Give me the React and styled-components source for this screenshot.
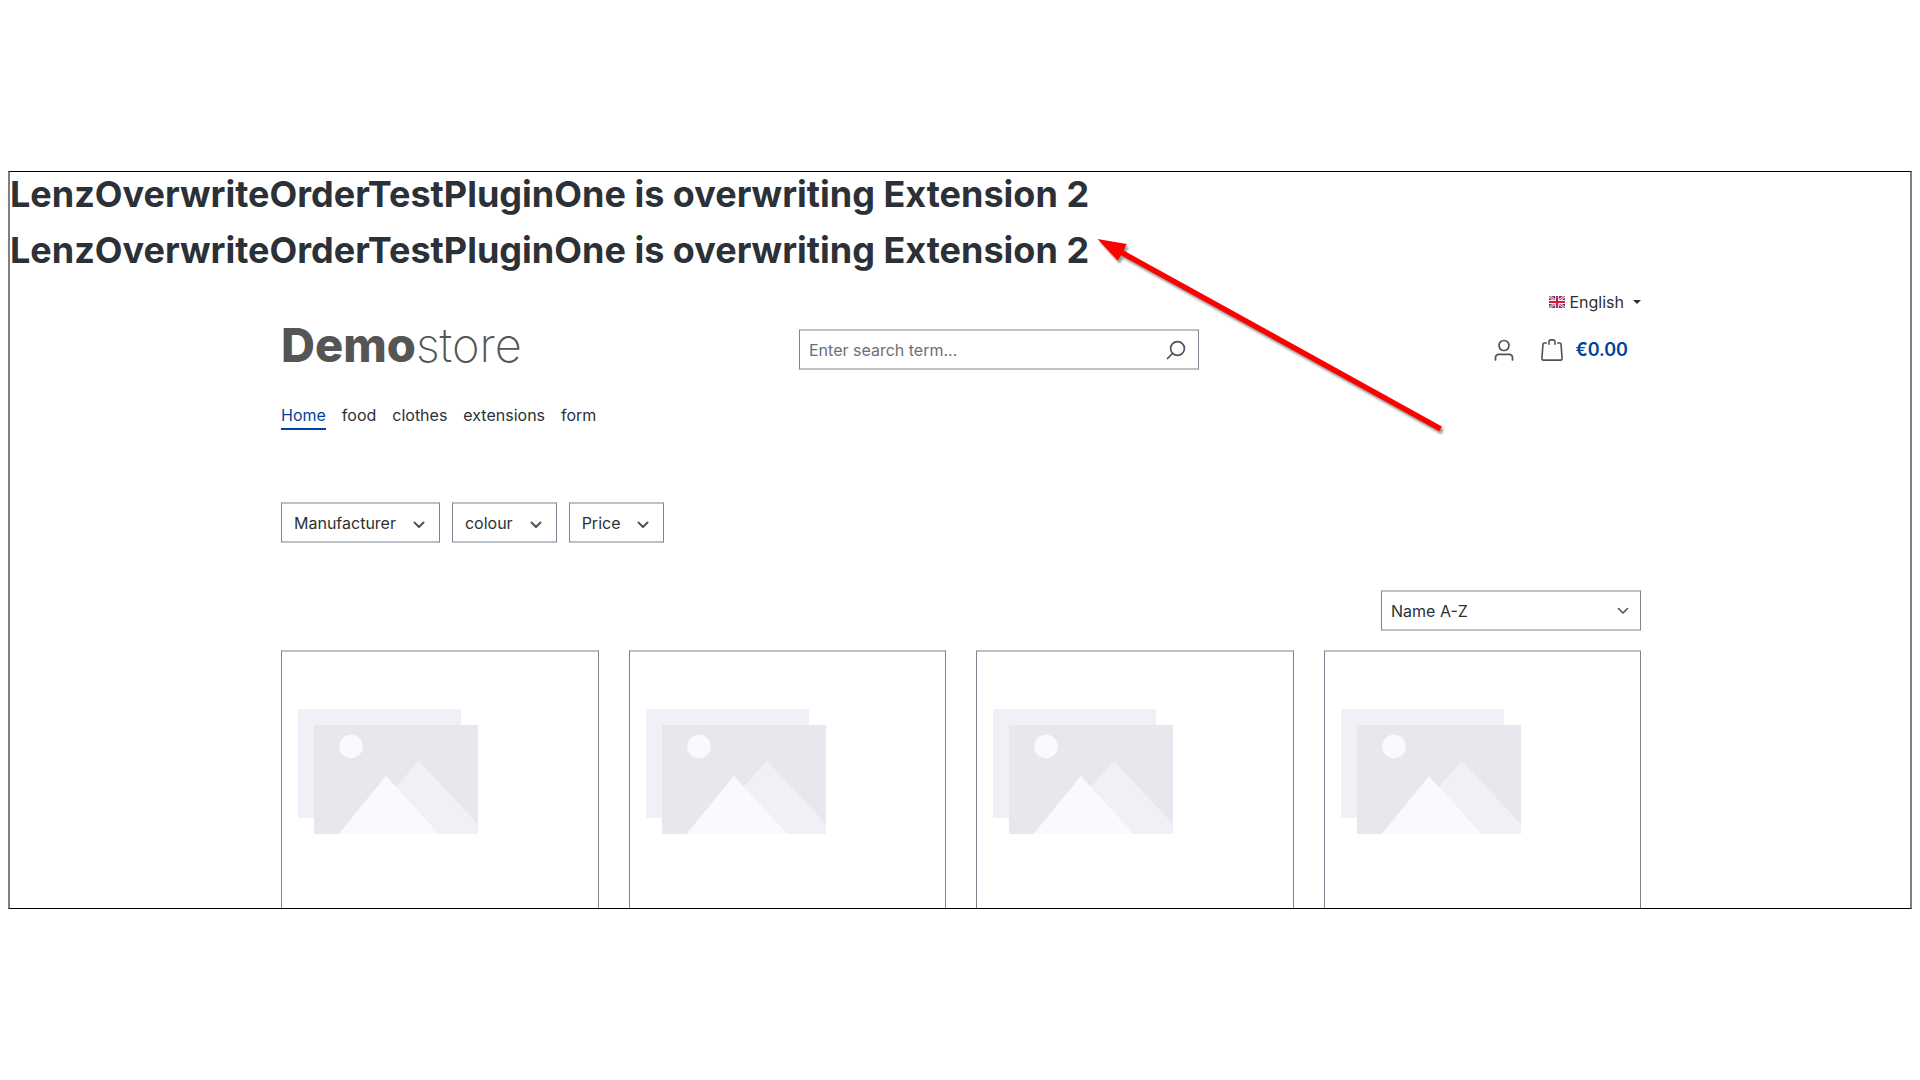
import styled, { createGlobalStyle } from "styled-components";

const navItems = ["Home", "food", "clothes", "extensions", "form"];
const filters = ["Manufacturer", "colour", "Price"];
const products = [1, 2, 3, 4];

function Flag() {
  return (
    <svg width="16" height="12" viewBox="0 0 16 12" aria-hidden="true">
      <rect width="16" height="12" fill="#3b4a86" />
      <path d="M0 0L16 12M16 0L0 12" stroke="#f0e6ec" strokeWidth="2.6" />
      <path d="M0 0L16 12M16 0L0 12" stroke="#d8183c" strokeWidth="0.9" />
      <path d="M8 0V12M0 6H16" stroke="#f6eef2" strokeWidth="4" />
      <path d="M8 0V12M0 6H16" stroke="#d8183c" strokeWidth="2.2" />
    </svg>
  );
}

function Chevron({ weight = 2 }) {
  return (
    <svg width="12" height="8" viewBox="0 0 12 8" fill="none" aria-hidden="true">
      <path
        d="M1.5 1.5L6 6L10.5 1.5"
        stroke="#4a545b"
        strokeWidth={weight}
        strokeLinecap="round"
        strokeLinejoin="round"
      />
    </svg>
  );
}

function SearchIcon() {
  return (
    <svg width="20" height="20" viewBox="0 0 20 20" fill="none" stroke="#4a545b" strokeWidth="1.7" strokeLinecap="round" aria-hidden="true">
      <circle cx="11.5" cy="8.5" r="6.9" />
      <path d="M6.5 13.5L1.5 18.5" />
    </svg>
  );
}

function AccountIcon() {
  return (
    <svg width="20" height="22" viewBox="0 0 20 22" fill="none" stroke="#4a545b" strokeWidth="1.7" strokeLinecap="round" aria-hidden="true">
      <circle cx="10" cy="6.5" r="5" />
      <path d="M1.5 21V19C1.5 16.8 3 15.3 5 15.3H15C17 15.3 18.5 16.8 18.5 19V21" />
    </svg>
  );
}

function BagIcon() {
  return (
    <svg width="22" height="22" viewBox="0 0 22 22" fill="none" stroke="#4a545b" strokeWidth="1.6" strokeLinecap="round" strokeLinejoin="round" aria-hidden="true">
      <path d="M5.3 4H3.2C2.5 4 2.1 4.4 2 5L0.9 19.4C0.8 20.4 1.4 21.1 2.4 21.1H19.6C20.6 21.1 21.2 20.4 21.1 19.4L20 5C19.9 4.4 19.5 4 18.8 4H16.7" />
      <path d="M8 5.2V2.6C8 1.5 8.6 0.9 9.6 0.9H12.4C13.4 0.9 14 1.5 14 2.6V5.2" />
    </svg>
  );
}

function Placeholder() {
  return (
    <svg width="180" height="125" viewBox="0 0 180 125" aria-hidden="true">
      <rect width="163" height="109" fill="#f0f1f7" />
      <rect x="16" y="16" width="164" height="109" fill="#e7e8ed" />
      <path d="M55 125L121 52L180 115V125Z" fill="#f0f1f7" />
      <path d="M40.500 125L88 67L141 125Z" fill="#f9faff" />
      <circle cx="53" cy="37.500" r="11.800" fill="#f9faff" />
    </svg>
  );
}

function App() {
  return (
    <Page>
      <GlobalStyle />
      <Frame>
        <Title>LenzOverwriteOrderTestPluginOne is overwriting Extension 2</Title>
        <Title>LenzOverwriteOrderTestPluginOne is overwriting Extension 2</Title>

        <Container>
          <TopBar>
            <LanguageButton type="button">
              <Flag />
              English
              <Caret />
            </LanguageButton>
          </TopBar>

          <Header>
            <Logo href="#">
              <b>Demo</b>store
            </Logo>
            <SearchForm role="search">
              <input type="text" placeholder="Enter search term..." aria-label="Search" />
              <button type="button" aria-label="Search">
                <SearchIcon />
              </button>
            </SearchForm>
            <Actions>
              <IconButton type="button" aria-label="Your account">
                <AccountIcon />
              </IconButton>
              <CartLink href="#">
                <BagIcon />
                €0.00
              </CartLink>
            </Actions>
          </Header>

          <Nav>
            {navItems.map((item) => (
              <NavLink key={item} href="#" $active={item === "Home"}>
                {item}
              </NavLink>
            ))}
          </Nav>

          <Filters>
            {filters.map((name) => (
              <FilterButton key={name} type="button">
                {name}
                <Chevron />
              </FilterButton>
            ))}
          </Filters>

          <Sorting>
            <SelectBox>
              <select aria-label="Sorting" defaultValue="name-asc">
                <option value="name-asc">Name A-Z</option>
              </select>
              <Chevron weight={1.6} />
            </SelectBox>
          </Sorting>

          <Listing>
            {products.map((id) => (
              <Card key={id}>
                <Placeholder />
              </Card>
            ))}
          </Listing>
        </Container>

        <Arrow width="350" height="200" viewBox="0 0 350 200" aria-hidden="true">
          <path
            d="M1.500 3L30.700 8L27.600 14.500L345.900 190.400L343.200 195.200L25 19.200L21.700 24.700Z"
            fill="#ff0000"
          />
        </Arrow>
      </Frame>
    </Page>
  );
}

const GlobalStyle = createGlobalStyle`
* {
box-sizing: border-box;
}

body {
margin: 0;
background: #fff;
color: #2b3136;
font-family: Inter, "Liberation Sans", sans-serif;
font-size: 16px;
line-height: 24px;
}

button, input, select {
font: inherit;
color: inherit;
}

a {
color: inherit;
text-decoration: none;
}

svg {
display: block;
flex: none;
}
`;

const Page = styled.div`
display: flex;
align-items: center;
min-height: 100vh;
padding: 0 8px;
`;

const Frame = styled.main`
position: relative;
width: 100%;
border: solid;
border-width: 1px 2px;
border-color: #000 #808080;
overflow: hidden;
`;

const Title = styled.h1`
margin: 0 0 12px;
font-size: 36px;
font-weight: 700;
line-height: 44px;
`;

const Container = styled.div`
width: 100%;
max-width: 1362px;
margin: 0 auto;
padding-left: 2px;
`;

const TopBar = styled.div`
display: flex;
justify-content: flex-end;
padding-top: 6px;
`;

const LanguageButton = styled.button`
display: flex;
align-items: center;
gap: 4px;
padding: 0;
border: 0;
background: none;
`;

const Caret = styled.span`
margin-left: 5px;
border: 4px solid transparent;
border-top-color: currentColor;
border-bottom: 0;
`;

const Header = styled.header`
display: grid;
grid-template-columns: 518px 400px 1fr;
align-items: center;
padding-top: 8px;
`;

const Logo = styled.a`
padding-bottom: 10px;
color: #555;
font-size: 47px;
font-weight: 200;
line-height: 45px;

b {
font-weight: 800;
}
`;

const SearchForm = styled.form`
display: flex;
height: 41px;
border: solid;
border-width: 2px 1px;
border-color: #bcc1c7 #798490;

input {
flex: 1;
min-width: 0;
padding: 0 9px;
border: 0;
background: none;
outline: none;
}

input::placeholder {
color: #6b7078;
opacity: 1;
}

button {
padding: 0 12px;
border: 0;
background: none;
}
`;

const Actions = styled.div`
display: flex;
justify-content: flex-end;
align-items: center;
gap: 27px;
padding-right: 13px;
`;

const IconButton = styled.button`
padding: 0;
border: 0;
background: none;
`;

const CartLink = styled.a`
display: flex;
align-items: center;
gap: 12px;
color: #0042a0;
font-size: 18px;
font-weight: 600;
`;

const Nav = styled.nav`
display: flex;
gap: 16px;
padding-top: 26px;
`;

const NavLink = styled.a`
padding-bottom: 1px;
border-bottom: 2px solid ${({ $active }) => ($active ? "#0042a0" : "transparent")};
color: ${({ $active }) => ($active ? "#0042a0" : "inherit")};
`;

const Filters = styled.div`
display: flex;
gap: 12px;
padding-top: 72px;
`;

const FilterButton = styled.button`
display: flex;
align-items: center;
gap: 17px;
height: 41px;
padding: 0 14px 0 12px;
border: solid;
border-width: 2px 1px;
border-color: #bcc1c7 #798490;
background: #fff;

svg {
margin-top: 4px;
}
`;

const Sorting = styled.div`
display: flex;
justify-content: flex-end;
padding: 47px 0 19px;
`;

const SelectBox = styled.div`
display: grid;
align-items: center;
width: 260px;
height: 41px;
border: solid;
border-width: 2px 1px;
border-color: #bcc1c7 #798490;

select, svg {
grid-area: 1 / 1;
}

select {
height: 100%;
padding: 0 9px;
border: 0;
background: none;
appearance: none;
outline: none;
}

svg {
justify-self: end;
margin-right: 11px;
pointer-events: none;
}
`;

const Listing = styled.div`
display: grid;
grid-template-columns: repeat(4, 1fr);
gap: 30px;
`;

const Card = styled.article`
height: 258px;
padding: 57px 16px 0;
border: solid;
border-width: 2px 1px 0;
border-color: #bcc1c7 #798490;
`;

/* callout drawn over the page, pointing at the second title */
const Arrow = styled.svg`
position: absolute;
top: 64px;
left: 1086px;
pointer-events: none;
filter: drop-shadow(2px 3px 1px rgba(0, 0, 0, 0.4));
`;

export default App;
